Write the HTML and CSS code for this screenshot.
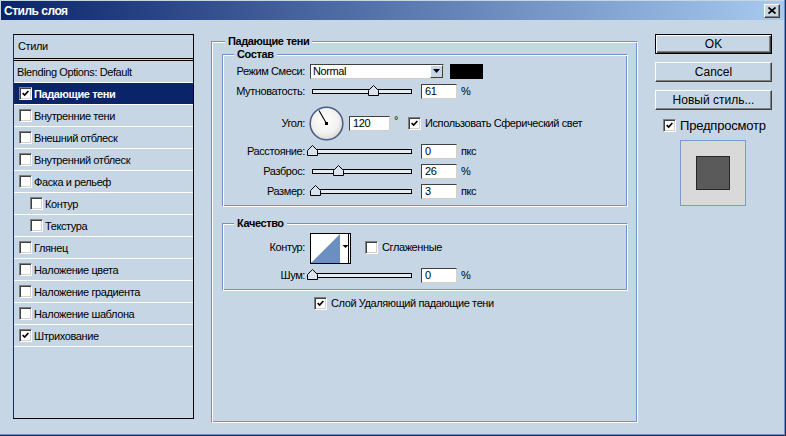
FILE: index.html
```html
<!DOCTYPE html>
<html>
<head>
    <meta charset="UTF-8">
    <title>Стиль слоя</title>
    <link rel="stylesheet" href="styles.css">
</head>
<body>
<div class="window">
    <div class="titlebar">
        <span class="title">Стиль слоя</span>
        <span class="close">
            <svg width="8" height="7" viewBox="0 0 8 7"><path d="M0.5 0.5L7.5 6.5M7.5 0.5L0.5 6.5" stroke="#000" stroke-width="1.7"/></svg>
        </span>
    </div>
    <div class="content">
        <div class="list">
            <div class="list-head">Стили</div>
            <div class="list-row plain">Blending Options: Default</div>
            <div class="list-row selected"><span class="check"><svg viewBox="0 0 11 11"><path d="M2 5l2.5 2.5L9 2.5" /></svg></span>Падающие тени</div>
            <div class="list-row"><span class="check"></span>Внутренние тени</div>
            <div class="list-row"><span class="check"></span>Внешний отблеск</div>
            <div class="list-row"><span class="check"></span>Внутренний отблеск</div>
            <div class="list-row"><span class="check"></span>Фаска и рельеф</div>
            <div class="list-row sub"><span class="check"></span>Контур</div>
            <div class="list-row sub"><span class="check"></span>Текстура</div>
            <div class="list-row"><span class="check"></span>Глянец</div>
            <div class="list-row"><span class="check"></span>Наложение цвета</div>
            <div class="list-row"><span class="check"></span>Наложение градиента</div>
            <div class="list-row"><span class="check"></span>Наложение шаблона</div>
            <div class="list-row"><span class="check"><svg viewBox="0 0 11 11"><path d="M2 5l2.5 2.5L9 2.5" /></svg></span>Штрихование</div>
        </div>

        <fieldset class="group main-group">
            <legend>Падающие тени</legend>

            <fieldset class="group sub-group">
                <legend>Состав</legend>
                <div class="row r-blend">
                    <label class="lbl">Режим Смеси:</label>
                    <div class="select"><span class="select-text">Normal</span><span class="drop"><svg width="7" height="4" viewBox="0 0 7 4"><path d="M0 0h7L3.5 4z"/></svg></span></div>
                    <span class="swatch"></span>
                </div>
                <div class="row r-opacity">
                    <label class="lbl">Мутноватость:</label>
                    <div class="slider"><div class="track"></div><svg class="thumb" style="left: 61px" viewBox="0 0 11 11"><path d="M0.5 10.5V5.5L5.5 0.5L10.5 5.5V10.5Z"/></svg></div>
                    <input class="field" value="61">
                    <span class="unit">%</span>
                </div>
                <div class="row r-angle">
                    <label class="lbl">Угол:</label>
                    <svg class="dial" width="35" height="35" viewBox="0 0 35 35">
                        <defs>
                            <radialGradient id="dialfill" cx="0.45" cy="0.4" r="0.6">
                                <stop offset="0" stop-color="#ffffff"/>
                                <stop offset="0.7" stop-color="#f1f1ef"/>
                                <stop offset="1" stop-color="#d8d8d6"/>
                            </radialGradient>
                        </defs>
                        <circle cx="17.5" cy="17.5" r="16.3" fill="url(#dialfill)" stroke="#4d5d86" stroke-width="1.6"/>
                        <path d="M17.5 17.5L10 4.5" stroke="#000" stroke-width="1.1"/>
                        <rect x="16" y="16" width="3" height="3" fill="#000"/>
                    </svg>
                    <input class="field angle" value="120">
                    <span class="deg">°</span>
                    <span class="check global"><svg viewBox="0 0 11 11"><path d="M2 5l2.5 2.5L9 2.5" /></svg></span>
                    <span class="check-label">Использовать Сферический свет</span>
                </div>
                <div class="row r-distance">
                    <label class="lbl">Расстояние:</label>
                    <div class="slider"><div class="track"></div><svg class="thumb" style="left: 0px" viewBox="0 0 11 11"><path d="M0.5 10.5V5.5L5.5 0.5L10.5 5.5V10.5Z"/></svg></div>
                    <input class="field" value="0">
                    <span class="unit">пкс</span>
                </div>
                <div class="row">
                    <label class="lbl">Разброс:</label>
                    <div class="slider"><div class="track"></div><svg class="thumb" style="left: 26px" viewBox="0 0 11 11"><path d="M0.5 10.5V5.5L5.5 0.5L10.5 5.5V10.5Z"/></svg></div>
                    <input class="field" value="26">
                    <span class="unit">%</span>
                </div>
                <div class="row">
                    <label class="lbl">Размер:</label>
                    <div class="slider"><div class="track"></div><svg class="thumb" style="left: 3px" viewBox="0 0 11 11"><path d="M0.5 10.5V5.5L5.5 0.5L10.5 5.5V10.5Z"/></svg></div>
                    <input class="field" value="3">
                    <span class="unit">пкс</span>
                </div>
            </fieldset>

            <fieldset class="group sub-group quality">
                <legend>Качество</legend>
                <div class="row r-contour">
                    <label class="lbl">Контур:</label>
                    <svg class="contour" width="41" height="31" viewBox="0 0 41 31">
                        <rect x="0.5" y="0.5" width="40" height="30" fill="#fff" stroke="#000"/>
                        <path d="M1 30L30 1V30Z" fill="#6a8fc0"/>
                        <path d="M32.5 12h6l-3 3z" fill="#000"/>
                        <path d="M38.5 0.5V30.5" stroke="#000"/>
                    </svg>
                    <span class="check smooth"></span>
                    <span class="check-label">Сглаженные</span>
                </div>
                <div class="row r-noise">
                    <label class="lbl">Шум:</label>
                    <div class="slider"><div class="track"></div><svg class="thumb" style="left: 0px" viewBox="0 0 11 11"><path d="M0.5 10.5V5.5L5.5 0.5L10.5 5.5V10.5Z"/></svg></div>
                    <input class="field" value="0">
                    <span class="unit">%</span>
                </div>
            </fieldset>

            <div class="row knockout">
                <span class="check"><svg viewBox="0 0 11 11"><path d="M2 5l2.5 2.5L9 2.5" /></svg></span>
                <span class="check-label">Слой Удаляющий падающие тени</span>
            </div>
        </fieldset>

        <div class="side">
            <button class="btn default">OK</button>
            <button class="btn">Cancel</button>
            <button class="btn">Новый стиль...</button>
            <div class="preview-toggle">
                <span class="check"><svg viewBox="0 0 11 11"><path d="M2 5l2.5 2.5L9 2.5" /></svg></span>
                <span class="preview-label">Предпросмотр</span>
            </div>
            <div class="preview">
                <div class="preview-swatch"></div>
            </div>
        </div>
    </div>
</div>
</body>
</html>
```

FILE: styles.css
```css
body {
    margin: 0;
    background-color: #c7d6e5;
    font-family: "Liberation Sans", Arial, sans-serif;
    font-size: 11px;
    letter-spacing: -0.4px;
    color: #000;
}
.window {
    width: 786px;
    height: 436px;
    box-sizing: border-box;
    padding: 1px 1px 0 1px;
    border-right: 1px solid #2b2b2b;
    border-bottom: 1px solid #2b2b2b;
    box-shadow: inset -1px -1px #6f93c6;
}
.titlebar {
    height: 19px;
    display: flex;
    align-items: center;
    justify-content: space-between;
    padding: 0 4px 0 3px;
    background: linear-gradient(to right, #0a246a, #a6caf0);
}
.title {
    color: #fff;
    font-weight: bold;
    font-size: 12px;
    letter-spacing: -0.5px;
}
.close {
    width: 16px;
    height: 14px;
    box-sizing: border-box;
    display: flex;
    align-items: center;
    justify-content: center;
    background-color: #c7d6e5;
    border: 1px solid;
    border-color: #fff #404040 #404040 #fff;
    box-shadow: inset -1px -1px #808080;
}
.content {
    display: flex;
    align-items: flex-start;
    padding: 14px 0 0 12px;
}

/* styles list */
.list {
    width: 181px;
    height: 385px;
    box-sizing: border-box;
    border: 1px solid #000;
    border-left-color: #1c2c55;
}
.list-head {
    height: 23px;
    line-height: 23px;
    padding-left: 4px;
    border-bottom: 3px double #000;
}
.list-row {
    height: 21px;
    display: flex;
    align-items: center;
    padding-left: 5px;
    border-bottom: 1px solid #fff;
}
.list-row.plain {
    padding-left: 3px;
}
.list-row.sub {
    padding-left: 16px;
}
.list-row .check {
    margin-right: 2px;
}
.list-row.selected {
    background-color: #0a246a;
    color: #fff;
    font-weight: bold;
}

/* checkbox */
.check {
    width: 13px;
    height: 13px;
    box-sizing: border-box;
    flex: none;
    display: inline-block;
    background-color: #fff;
    border: 1px solid;
    border-color: #808080 #fff #fff #808080;
    box-shadow: inset 1px 1px #404040, inset -1px -1px #d4d0c8;
    padding: 1px;
}
.check svg {
    display: block;
    width: 9px;
    height: 9px;
    fill: none;
    stroke: #000;
    stroke-width: 2;
}
.check-label {
    margin-left: 4px;
}

/* group boxes */
.group {
    box-sizing: border-box;
    margin: 0;
    padding: 0;
    border: 1px solid;
    border-color: #6f93c6 #fff #fff #6f93c6;
    box-shadow: inset 1px 1px #fff, inset -1px -1px #6f93c6;
    min-width: 0;
}
.group legend {
    font-weight: bold;
    line-height: 14px;
    padding: 0 3px;
    background-color: #c7d6e5;
}
.main-group {
    width: 427px;
    height: 389px;
    margin-left: 17px;
}
.main-group > legend {
    margin-left: 13px;
}
.sub-group {
    width: 406px;
    margin-left: 10px;
    margin-top: -1px;
    padding-bottom: 7px;
}
.sub-group > legend {
    margin-left: 11px;
}
.sub-group.quality {
    margin-top: 9px;
    padding-bottom: 7px;
}

/* form rows */
.row {
    display: flex;
    align-items: center;
    height: 16px;
    margin-top: 4px;
}
.r-blend {
    margin-top: 2px;
}
.r-angle {
    height: 36px;
    margin-top: 6px;
}
.r-distance {
    margin-top: 2px;
}
.lbl {
    width: 84px;
    box-sizing: border-box;
    padding-right: 2px;
    text-align: right;
    flex: none;
}
.select {
    width: 134px;
    height: 15px;
    margin-left: 3px;
    box-sizing: border-box;
    display: flex;
    align-items: center;
    justify-content: space-between;
    background-color: #fff;
    border: 1px solid;
    border-color: #404040 #d4d0c8 #d4d0c8 #404040;
    padding-left: 2px;
}
.drop {
    width: 13px;
    height: 13px;
    box-sizing: border-box;
    display: flex;
    align-items: center;
    justify-content: center;
    background-color: #c7d6e5;
    border: 1px solid;
    border-color: #fff #404040 #404040 #fff;
}
.swatch {
    width: 33px;
    height: 15px;
    margin-left: 6px;
    background-color: #000;
}
.slider {
    position: relative;
    width: 110px;
    height: 12px;
    flex: none;
}
.track {
    margin: 4px 0 0 5px;
    width: 100px;
    height: 5px;
    box-sizing: border-box;
    border: 1px solid #000;
    background-color: #e4ebf3;
}
.thumb {
    position: absolute;
    top: 0;
    width: 11px;
    height: 11px;
    fill: #dbe3ee;
    stroke: #000;
}
.field {
    width: 36px;
    height: 15px;
    box-sizing: border-box;
    margin: 0 0 0 4px;
    padding: 0 0 0 3px;
    font-family: inherit;
    font-size: 11px;
    letter-spacing: inherit;
    border: 1px solid;
    border-color: #404040 #d4d0c8 #d4d0c8 #404040;
    background-color: #fff;
    outline: none;
}
.unit {
    margin-left: 4px;
}
.dial {
    margin-left: 2px;
    flex: none;
}
.field.angle {
    width: 41px;
    margin-left: 5px;
}
.deg {
    margin-left: 4px;
    align-self: flex-start;
    margin-top: 9px;
}
.check.global {
    margin-left: 10px;
}
.r-contour {
    height: 31px;
    margin-top: 3px;
    align-items: flex-start;
}
.r-contour .lbl {
    margin-top: 8px;
}
.contour {
    margin-left: 3px;
    flex: none;
}
.check.smooth {
    margin-left: 14px;
    margin-top: 8px;
}
.r-contour .check-label {
    margin-top: 8px;
}
.r-noise {
    margin-top: 3px;
}
.knockout {
    margin: 4px 0 0 102px;
}

/* right column */
.side {
    width: 117px;
    margin-left: 17px;
    display: flex;
    flex-direction: column;
}
.btn {
    height: 20px;
    margin-bottom: 8px;
    padding: 0;
    font-family: inherit;
    font-size: 12px;
    letter-spacing: 0;
    color: #000;
    background-color: #c7d6e5;
    border: 1px solid;
    border-color: #fff #404040 #404040 #fff;
    box-shadow: inset -1px -1px #808080;
}
.btn.default {
    border: 1px solid #000;
    box-shadow: inset 1px 1px #fff, inset -1px -1px #404040, inset -2px -2px #808080;
}
.preview-toggle {
    display: flex;
    align-items: center;
    margin-left: 8px;
}
.preview-label {
    margin-left: 4px;
    font-size: 13px;
    letter-spacing: -0.2px;
}
.preview {
    width: 66px;
    height: 66px;
    box-sizing: border-box;
    margin: 7px 0 0 25px;
    display: flex;
    align-items: center;
    justify-content: center;
    background-color: #d9d9d9;
    border: 1px solid #7a9ccc;
}
.preview-swatch {
    width: 34px;
    height: 34px;
    box-sizing: border-box;
    background-color: #5a5a5a;
    border: 1px solid #262626;
}
```
